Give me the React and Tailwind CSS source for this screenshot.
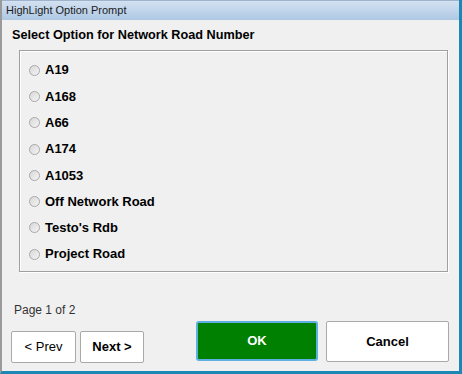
const options = ['A19', 'A168', 'A66', 'A174', 'A1053', 'Off Network Road', "Testo's Rdb", 'Project Road']

function Radio() {
  return (
    <span className="w-[11px] h-[11px] rounded-full border border-[#a8a8a8] bg-gradient-to-br from-[#d8d8d8] to-[#f4f4f4] shrink-0" />
  )
}

export default function App() {
  return (
    <div
      className="w-[462px] h-[374px] flex flex-col bg-[#f0f0f0] border-l-2 border-l-[#9a9a9a] border-r-[3px] border-r-[#1c86b4] border-b-[3px] border-b-[#1c86b4] overflow-hidden"
      style={{ fontFamily: '"Liberation Sans", Arial, sans-serif' }}
    >
      {/* Title bar */}
      <div className="h-[20px] shrink-0 flex items-center pl-[4px] bg-gradient-to-b from-[#d3e1f1] to-[#aec8e4] border-t border-t-[#9eb4cc] text-[11px] text-[#1b1b1b]">
        HighLight Option Prompt
      </div>

      {/* Body */}
      <div className="flex-1 flex flex-col pl-[9px] pr-[11px]">
        <div className="h-[30px] flex items-center pt-[1px] pl-[1px] text-[12.7px] font-bold text-black">
          Select Option for Network Road Number
        </div>

        <div className="ml-[8px] h-[222px] border border-[#a0a0a0] shadow-[inset_1px_1px_0_#fff,1px_1px_0_#fff] flex flex-col pt-[6px] pl-[9px]">
          {options.map((o) => (
            <div key={o} className="h-[26.3px] flex items-center gap-[5px] text-[13px] font-bold text-black">
              <Radio />
              <span>{o}</span>
            </div>
          ))}
        </div>

        <div className="flex items-end justify-between mt-[29px]">
          <div className="flex flex-col pl-[3px]">
            <span className="text-[12px] text-[#333]">Page 1 of 2</span>
            <div className="flex gap-[4px] mt-[12px] -ml-[3px]">
              <button className="w-[65px] h-[32px] bg-white border border-[#a9a9a9] rounded-[2px] text-[13px] text-black">
                &lt; Prev
              </button>
              <button className="w-[64px] h-[32px] bg-white border border-[#a9a9a9] rounded-[2px] text-[13px] font-bold text-black">
                Next &gt;
              </button>
            </div>
          </div>
          <div className="flex gap-[8px] mb-[1px] -mr-[1px]">
            <button className="w-[122px] h-[40px] bg-[#008000] border-2 border-[#5eb0e0] rounded-[3px] text-[13px] font-bold text-white">
              OK
            </button>
            <button className="w-[123px] h-[41px] bg-white border border-[#a9a9a9] rounded-[2px] text-[13px] font-bold text-black">
              Cancel
            </button>
          </div>
        </div>
      </div>
    </div>
  )
}
